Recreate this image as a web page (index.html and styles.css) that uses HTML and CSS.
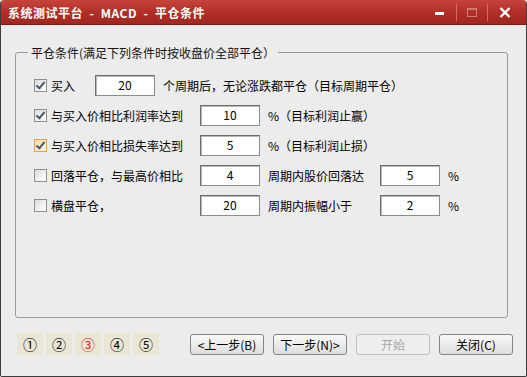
FILE: index.html
```html
<!DOCTYPE html>
<html lang="zh-CN">
<head>
    <meta charset="UTF-8">
    <title>平仓条件</title>
    <link rel="stylesheet" href="styles.css">
</head>
<body>
    <div class="window">
        <div class="titlebar">
            <span class="title">系统测试平台  -  MACD  -  平仓条件</span>
            <div class="controls">
                <span class="ctl ctl-min"></span>
                <span class="sep"></span>
                <span class="ctl ctl-max"></span>
                <span class="sep"></span>
                <span class="ctl ctl-close">
                    <svg width="12" height="11" viewBox="0 0 12 11"><path d="M1.5 1 L10.5 10 M10.5 1 L1.5 10" stroke="#fff" stroke-width="2.4"/></svg>
                </span>
            </div>
        </div>

        <div class="content">
            <fieldset class="group">
                <legend>平仓条件(满足下列条件时按收盘价全部平仓）</legend>

                <div class="row">
                    <label class="opt opt-short"><span class="chk checked"></span>买入</label>
                    <span class="field">20</span>
                    <span class="after">个周期后，无论涨跌都平仓（目标周期平仓）</span>
                </div>
                <div class="row">
                    <label class="opt"><span class="chk checked"></span>与买入价相比利润率达到</label>
                    <span class="field">10</span>
                    <span class="after">%（目标利润止赢）</span>
                </div>
                <div class="row">
                    <label class="opt"><span class="chk checked hover"></span>与买入价相比损失率达到</label>
                    <span class="field">5</span>
                    <span class="after">%（目标利润止损）</span>
                </div>
                <div class="row">
                    <label class="opt"><span class="chk"></span>回落平仓，与最高价相比</label>
                    <span class="field">4</span>
                    <span class="after mid">周期内股价回落达</span>
                    <span class="field">5</span>
                    <span class="after">%</span>
                </div>
                <div class="row">
                    <label class="opt"><span class="chk"></span>横盘平仓，</label>
                    <span class="field">20</span>
                    <span class="after mid">周期内振幅小于</span>
                    <span class="field">2</span>
                    <span class="after">%</span>
                </div>
            </fieldset>

            <div class="footer">
                <div class="steps">
                    <span class="step">①</span>
                    <span class="step">②</span>
                    <span class="step current">③</span>
                    <span class="step">④</span>
                    <span class="step">⑤</span>
                </div>
                <div class="buttons">
                    <button class="btn">&lt;上一步(B)</button>
                    <button class="btn">下一步(N)&gt;</button>
                    <button class="btn" disabled>开始</button>
                    <button class="btn">关闭(C)</button>
                </div>
            </div>
        </div>
    </div>
</body>
</html>
```

FILE: styles.css
```css
body {
    margin: 0;
    padding: 0;
    background: #ffffff;
    font-family: "Noto Sans CJK SC", "DejaVu Sans", sans-serif;
    font-size: 12px;
    color: #000;
}
.window {
    width: 527px;
    height: 377px;
    box-sizing: border-box;
    border: 1px solid #3c3c3c;
    border-top: none;
    border-radius: 4px 4px 2px 2px;
    background: #ececec;
    overflow: hidden;
}
.titlebar {
    height: 25px;
    display: flex;
    align-items: center;
    justify-content: space-between;
    padding: 0 10px 0 7px;
    background: linear-gradient(#c7443b, #b23129 45%, #a2261f);
    border-bottom: 1px solid #7e1c17;
    box-sizing: border-box;
}
.title {
    color: #fff;
    font-weight: bold;
    font-size: 12px;
    letter-spacing: 0.5px;
    white-space: pre;
}
.controls {
    display: flex;
    align-items: center;
}
.ctl {
    width: 22px;
    height: 16px;
    display: flex;
    align-items: center;
    justify-content: center;
}
.ctl-max {
    width: 18px;
}
.ctl-min::before {
    content: "";
    width: 9px;
    height: 3px;
    background: #fff;
    margin-top: 2px;
}
.ctl-max::before {
    content: "";
    width: 8px;
    height: 6px;
    border: 1px solid #cf7a74;
    border-top-width: 2px;
}
.sep {
    width: 1px;
    height: 17px;
    margin: 0 6px;
    background: #d46a63;
}
.content {
    padding: 20px 18px 0 14px;
}
.group {
    margin: 0;
    padding: 0 0 0 18px;
    width: 493px;
    height: 273px;
    box-sizing: border-box;
    border: 1px solid #9a9a9a;
    border-radius: 3px;
}
.group legend {
    margin-left: -6px;
    padding: 0 3px;
    line-height: 15px;
    color: #111;
}
.row {
    display: flex;
    align-items: center;
    height: 30px;
}
.row:first-of-type {
    margin-top: 10px;
}
.opt {
    display: flex;
    align-items: center;
    width: 166px;
    flex: none;
}
.opt-short {
    width: 61px;
}
.chk {
    width: 11px;
    height: 11px;
    border: 1px solid #8e8f8f;
    background: linear-gradient(135deg, #dcdcdc, #f8f8f8 80%);
    margin-right: 4px;
    position: relative;
    flex: none;
}
.chk.hover {
    border-color: #e8a34a;
    background: linear-gradient(135deg, #f8d9a6, #fdf1dc 80%);
}
.chk.checked::after {
    content: "";
    position: absolute;
    left: 3px;
    top: 0px;
    width: 3px;
    height: 7px;
    border: solid #4b5b69;
    border-width: 0 2px 2px 0;
    transform: rotate(40deg);
}
.field {
    width: 60px;
    height: 21px;
    box-sizing: border-box;
    flex: none;
    border: 1px solid #6d6d6d;
    border-right-color: #8c8c8c;
    border-bottom-color: #8c8c8c;
    box-shadow: inset 1px 1px 0 #b8b8b8;
    background: #fff;
    text-align: center;
    line-height: 15px;
    padding-top: 1px;
}
.after {
    margin-left: 8px;
    white-space: nowrap;
}
.after.mid {
    width: 112px;
    flex: none;
}
.footer {
    display: flex;
    align-items: center;
    margin-top: 15px;
    padding-left: 2px;
}
.steps {
    display: flex;
    gap: 3px;
}
.step {
    width: 26px;
    height: 22px;
    line-height: 22px;
    text-align: center;
    background: #e9e6d6;
    font-size: 14px;
}
.step.current {
    color: #e0261e;
}
.buttons {
    display: flex;
    gap: 9px;
    margin-left: 31px;
}
.btn {
    width: 74px;
    height: 21px;
    padding: 0;
    font-family: inherit;
    font-size: 12px;
    color: #000;
    border: 1px solid #858585;
    border-radius: 3px;
    background: linear-gradient(#fafafa, #ececec 50%, #dddddd);
}
.btn:disabled {
    color: #a8a8a8;
    border-color: #c0c0c0;
    background: #eeeeee;
}
```
